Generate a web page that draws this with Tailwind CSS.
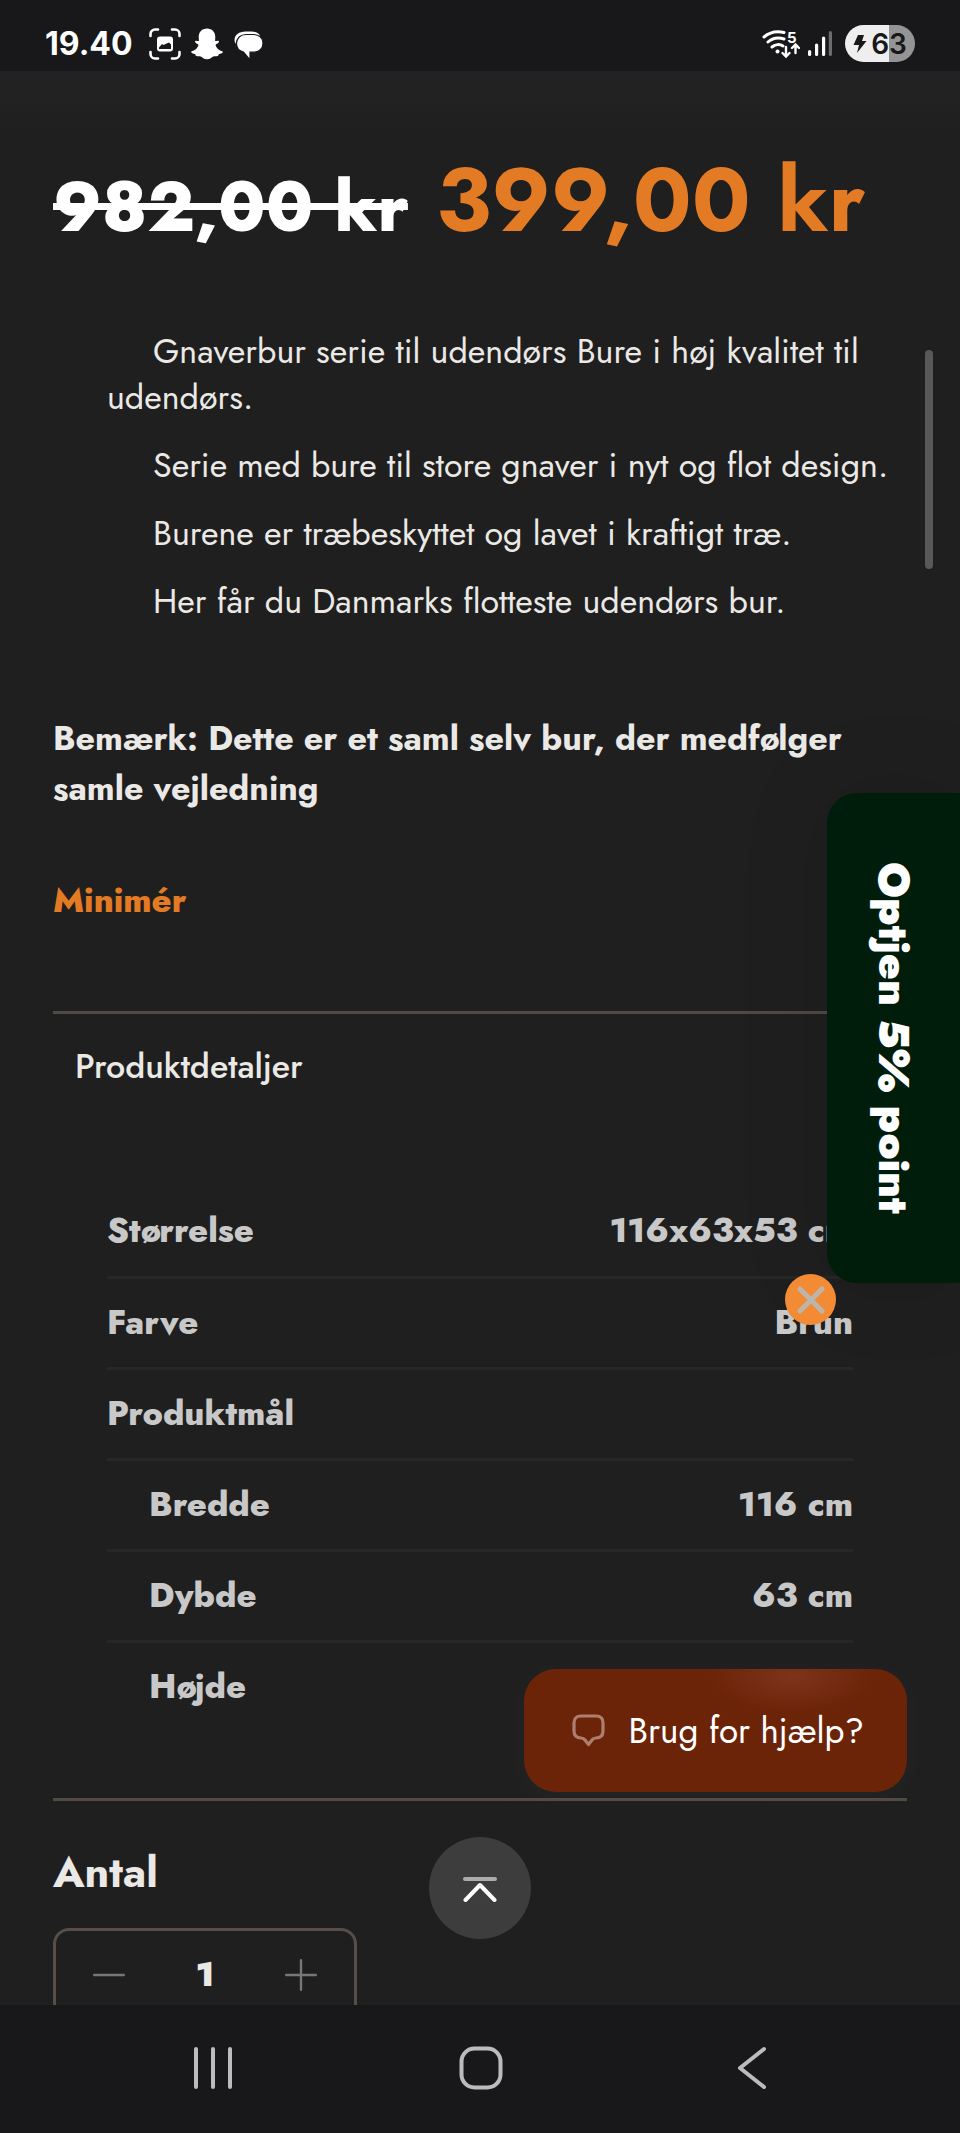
<!DOCTYPE html>
<html lang="da">
<head>
    <meta charset="UTF-8">
    <meta name="viewport" content="width=device-width, initial-scale=1.0">
    <title>Gnaverbur</title>
    <script src="https://cdn.jsdelivr.net/npm/@tailwindcss/browser@4"></script>
</head>
<body class="flex flex-col h-screen overflow-hidden bg-[#1f1f1f] text-[#ebe9e6] font-['Jost','Lato',sans-serif]">

    <!-- Status bar -->
    <header class="flex items-center justify-between shrink-0 h-[71px] pt-4 px-[45px] bg-[#18181a] text-white font-['Inter',sans-serif]">
        <div class="flex items-center">
            <span class="text-[32px] leading-10 font-bold">19.40</span>
            <svg class="ml-4 w-8 h-8" viewBox="0 0 32 32" fill="none" stroke="currentColor" stroke-width="2.6" stroke-linecap="round">
                <path d="M1.500 8V6a4.500 4.500 0 0 1 4.500-4.500h3M23 1.500h3A4.500 4.500 0 0 1 30.500 6v2M30.500 24v2a4.500 4.500 0 0 1-4.500 4.500h-3M9 30.500H6A4.500 4.500 0 0 1 1.500 26v-2"/>
                <path fill="currentColor" stroke="none" fill-rule="evenodd" d="M11 8.500h10a3 3 0 0 1 3 3v9a3 3 0 0 1-3 3H11a3 3 0 0 1-3-3v-9a3 3 0 0 1 3-3zM10 19.500v1.500h12v-4.500l-2-2-3.500 1.500-2 1-1.500-1z"/>
            </svg>
            <svg class="ml-[10px] w-8 h-8" viewBox="0 0 32 32" fill="currentColor">
                <path d="M16 .5c5 0 8.300 3.500 8.300 8.500l-.2 4c1.500.2 3-.8 3.700.2.800 1.200-1.500 2.300-2.700 3-.8.5-.5 1.300 0 2.200 1.200 2.300 3.300 4.200 6 4.800 1 .3 1 1.300 0 1.900-1.200.7-2.600.8-3.300 1.200-.5.400-.3 1.500-1 1.800-1.200.4-2.800-.3-4.500.4-1.900.8-3 2.800-6.300 2.800s-4.400-2-6.300-2.800c-1.700-.7-3.300 0-4.500-.4-.7-.3-.5-1.400-1-1.800-.7-.4-2.100-.5-3.300-1.200-1-.6-1-1.600 0-1.900 2.700-.6 4.800-2.500 6-4.800.5-.9.800-1.700 0-2.200-1.200-.7-3.500-1.800-2.700-3 .7-1 2.200 0 3.700-.2L7.700 9C7.700 4 11 .500 16 .500z"/>
            </svg>
            <svg class="ml-[10px] w-8 h-8" viewBox="0 0 32 32" fill="currentColor">
                <path d="M12.500 3.500h6c4 0 7 1.500 8.500 4L6 17.500C3 17 1.500 14.500 1.500 12c0-5 4.500-8.500 11-8.500z"/>
                <path d="M13 6.500h7.500c5.500 0 9.500 3.500 9.500 8.700 0 5.300-4 9-9.500 9H17V32L10.500 24C6 23 3.500 19.500 3.500 15.500c0-5.500 4-9 9.500-9z" stroke="#18181a" stroke-width="1.200"/>
            </svg>
        </div>
        <div class="flex items-center">
            <svg class="w-[38px] h-8" viewBox="0 0 38 32" fill="none" stroke="currentColor" stroke-width="3" stroke-linecap="round">
                <path d="M2 9C8 4 15 3 22 4.500M6 14c4.500-4 10-5 16-3M10 19c3.500-3 8-3 11-1"/>
                <circle cx="15.500" cy="23.500" r="2" fill="currentColor" stroke="none"/>
                <path d="M24 19v9M20.500 25l3.500 3.500 3.500-3.500M33.500 25v-8M30 20l3.500-3.500L37 20" stroke-width="2.400"/>
                <text x="25" y="15" fill="currentColor" stroke="none" font-size="15" font-weight="700">5</text>
            </svg>
            <svg class="ml-2 w-6 h-8" viewBox="0 0 24 32" stroke="currentColor" stroke-width="3.200" stroke-linecap="round">
                <path d="M1.600 23.500v3M8.600 17v9.500M15.600 10v16.500"/>
                <path d="M22.400 4.500v22" stroke="#6c6c6e"/>
            </svg>
            <div class="flex items-center justify-center gap-1 ml-[13px] w-[70px] h-[37px] rounded-full bg-linear-to-r from-[#eeeeee] from-63% to-[#949494] to-63% text-[#18181a]">
                <svg class="w-[14px] h-5" viewBox="0 0 14 20" fill="currentColor"><path d="M5 1h6l-2 6h4.500L4 19l2-8H.5z"/></svg>
                <span class="text-[28px] leading-8 font-semibold">63</span>
            </div>
        </div>
    </header>

    <main class="relative flex-1 min-h-0 overflow-hidden px-[53px] bg-linear-to-b from-[#232323] to-[#1f1f1f] to-[60px]">

        <!-- Prices -->
        <div class="flex items-baseline gap-7 pt-[77px] whitespace-nowrap leading-[104px]">
            <del class="text-[70px] font-extrabold text-white decoration-[7px]">982,00 kr</del>
            <strong class="text-[89px] font-bold text-[#e37a24]">399,00 kr</strong>
        </div>

        <!-- Description -->
        <div class="flex flex-col gap-[22px] mt-[70px] pl-[54px] text-[34px] leading-[46px] indent-[46px]">
            <p>Gnaverbur serie til udendørs Bure i høj kvalitet til udendørs.</p>
            <p>Serie med bure til store gnaver i nyt og flot design.</p>
            <p>Burene er træbeskyttet og lavet i kraftigt træ.</p>
            <p>Her får du Danmarks flotteste udendørs bur.</p>
        </div>
        <p class="mt-[89px] text-[34px] leading-[50px] font-bold">Bemærk: Dette er et saml selv bur, der medfølger samle vejledning</p>
        <button type="button" class="block mt-[62px] text-[34px] leading-[50px] font-extrabold text-[#e37a24]">Minimér</button>

        <!-- Product details -->
        <section class="mt-[85px] pb-[66px] border-y-[3px] border-[#4f4a43]">
            <h2 class="pt-[28px] pl-[22px] text-[34px] leading-[50px] font-medium">Produktdetaljer</h2>
            <div class="mt-[94px] mx-[54px]">
                <table class="w-full text-[34px] leading-[50px] font-extrabold text-[#c8c8c8]">
                    <tbody>
                        <tr class="h-[91px] border-b-3 border-[#272727]">
                            <th scope="row" class="text-left font-extrabold">Størrelse</th>
                            <td class="text-right">116x63x53 cm</td>
                        </tr>
                        <tr class="h-[91px] border-b-3 border-[#272727]">
                            <th scope="row" class="text-left font-extrabold">Farve</th>
                            <td class="text-right">Brun</td>
                        </tr>
                        <tr class="h-[91px] border-b-3 border-[#272727]">
                            <th scope="row" class="text-left font-extrabold">Produktmål</th>
                            <td></td>
                        </tr>
                        <tr class="h-[91px] border-b-3 border-[#272727]">
                            <th scope="row" class="pl-[42px] text-left font-extrabold">Bredde</th>
                            <td class="text-right">116 cm</td>
                        </tr>
                        <tr class="h-[91px] border-b-3 border-[#272727]">
                            <th scope="row" class="pl-[42px] text-left font-extrabold">Dybde</th>
                            <td class="text-right">63 cm</td>
                        </tr>
                        <tr class="h-[91px]">
                            <th scope="row" class="pl-[42px] text-left font-extrabold">Højde</th>
                            <td class="text-right"></td>
                        </tr>
                    </tbody>
                </table>
            </div>
        </section>

        <!-- Quantity -->
        <label for="qty" class="block mt-[41px] text-[43px] leading-[60px] font-bold">Antal</label>
        <div class="flex items-center justify-between mt-[26px] w-[304px] h-[94px] px-[37px] border-3 border-[#564f48] rounded-2xl">
            <button type="button" aria-label="Færre">
                <svg class="w-8 h-8" viewBox="0 0 32 32" stroke="#777777" stroke-width="2.400" stroke-linecap="round"><path d="M1.200 16h29.600"/></svg>
            </button>
            <input id="qty" type="text" inputmode="numeric" value="1" class="w-20 bg-transparent text-center text-[34px] leading-[50px] font-black">
            <button type="button" aria-label="Flere">
                <svg class="w-8 h-8" viewBox="0 0 32 32" stroke="#777777" stroke-width="2.400" stroke-linecap="round"><path d="M1.200 16h29.600M16 1.200v29.600"/></svg>
            </button>
        </div>

        <!-- Scroll position -->
        <div class="absolute top-[279px] right-[27px] w-2 h-[219px] rounded-full bg-[#585858]"></div>

        <!-- Loyalty tab -->
        <div class="absolute top-[722px] right-0">
            <button type="button" class="flex items-center justify-center w-[133px] h-[490px] rounded-l-[30px] bg-[#001c0b] text-[43px] leading-[60px] font-black text-white shadow-[0_0_90px_rgba(0,0,0,0.12)] [writing-mode:vertical-rl]">Optjen 5% point</button>
            <button type="button" aria-label="Luk" class="absolute right-[124px] -bottom-[42px] flex items-center justify-center w-[51px] h-[51px] rounded-full bg-[#f38b35]">
                <svg class="w-7 h-7" viewBox="0 0 28 28" stroke="#bdb4aa" stroke-width="5" stroke-linecap="round"><path d="M3 3l22 22M25 3L3 25"/></svg>
            </button>
        </div>

        <!-- Chat -->
        <button type="button" class="absolute right-[53px] bottom-[213px] flex items-center justify-between w-[383px] h-[123px] pl-[48px] pr-[43px] rounded-[32px] bg-[#6c2409] bg-radial-[at_70%_6%] from-[#7d341a] to-[#6c2409] to-22% text-[35px] leading-[50px] text-white whitespace-nowrap shadow-[0_4px_30px_rgba(255,255,255,0.03)]">
            <svg class="w-[33px] h-[33px]" viewBox="0 0 33 33" fill="none" stroke="#ad7f70" stroke-width="3.200" stroke-linejoin="round">
                <path d="M9 2h15c4.500 0 7 2.500 7 7v8c0 4.500-2.500 7-7 7-2 0-3 .5-4 2l-3.500 4.500L13 26c-1-1.500-2-2-4-2-4.500 0-7-2.500-7-7V9c0-4.500 2.500-7 7-7z"/>
            </svg>
            Brug for hjælp?
        </button>

        <!-- Back to top -->
        <button type="button" aria-label="Til toppen" class="absolute left-1/2 -translate-x-1/2 bottom-[66px] flex items-center justify-center w-[102px] h-[102px] rounded-full bg-[#3d3d3d]">
            <svg class="w-9 h-7" viewBox="0 0 36 28" fill="none" stroke-width="4" stroke-linecap="round" stroke-linejoin="round">
                <path d="M3 5h30" stroke="#acacac"/>
                <path d="M3.500 26L18 11l14.500 15" stroke="#ffffff"/>
            </svg>
        </button>
    </main>

    <!-- Navigation bar -->
    <nav class="flex items-center justify-around shrink-0 h-32 pl-[79px] pr-[76px] pb-0.5 bg-[#18181a] text-[#bcbcbe]">
        <button type="button" aria-label="Seneste">
            <svg class="w-11 h-11" viewBox="0 0 44 44" fill="none" stroke="currentColor" stroke-width="4" stroke-linecap="round"><path d="M5 3v38M22 3v38M39 3v38"/></svg>
        </button>
        <button type="button" aria-label="Hjem">
            <svg class="w-11 h-11" viewBox="0 0 44 44" fill="none" stroke="currentColor" stroke-width="4"><rect x="2.500" y="2.500" width="39" height="39" rx="13"/></svg>
        </button>
        <button type="button" aria-label="Tilbage">
            <svg class="w-11 h-11" viewBox="0 0 44 44" fill="none" stroke="currentColor" stroke-width="4" stroke-linecap="round" stroke-linejoin="round"><path d="M36 3L12 22 36 41"/></svg>
        </button>
    </nav>
</body>
</html>
